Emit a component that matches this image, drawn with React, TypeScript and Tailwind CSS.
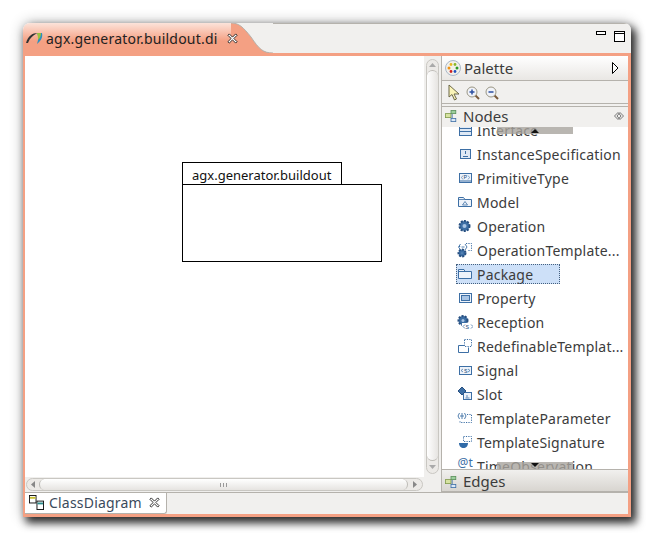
import type { ReactNode } from "react";

const blue = "#3d6fa5";

function Ico({ children }: { children: ReactNode }) {
  return (
    <svg width="16" height="16" viewBox="0 0 16 16" fill="none" stroke={blue} strokeWidth="1" className="shrink-0">
      {children}
    </svg>
  );
}

function Gear({ cx = 7.5, cy = 8, r = 5 }: { cx?: number; cy?: number; r?: number }) {
  return (
    <>
      <circle cx={cx} cy={cy} r={r} fill="#3d6fa5" stroke="#274f80" strokeWidth="2" strokeDasharray="2 1.2" />
      <circle cx={cx} cy={cy} r={r - 3} fill="#a8c4e4" stroke="none" />
    </>
  );
}

const smallText = { fontSize: 6, fontFamily: "Liberation Mono, monospace", fill: "#274f80", stroke: "none" } as const;

const nodes: { label: string; icon: ReactNode; selected?: boolean }[] = [
  {
    label: "Interface",
    icon: (
      <Ico>
        <rect x="2.5" y="1.5" width="12" height="12" fill="#dfe9f5" />
        <path d="M2.5 6.5h12M2.5 9.5h12M8 3v2" />
      </Ico>
    ),
  },
  {
    label: "InstanceSpecification",
    icon: (
      <Ico>
        <rect x="3.5" y="3.5" width="10" height="9" fill="#dfe9f5" />
        <path d="M8.5 5v3M6 10.5h5" />
      </Ico>
    ),
  },
  {
    label: "PrimitiveType",
    icon: (
      <Ico>
        <rect x="2.5" y="3.5" width="12" height="9" fill="#eef3fa" />
        <path d="M2.5 11h12" />
        <text x="6.500" y="9" style={smallText}>P</text>
        <path d="M6 5.500l-1.500 2L6 9.500M11 5.500l1.500 2L11 9.500" strokeWidth="0.6" />
      </Ico>
    ),
  },
  {
    label: "Model",
    icon: (
      <Ico>
        <path d="M1.5 3.5h5l1.5 2h6.5v7h-13z" fill="#eef3fa" />
        <path d="M1.5 5.5h6.5M8 7.5l2.5 3.5h-5z" strokeWidth="0.8" />
      </Ico>
    ),
  },
  { label: "Operation", icon: <Ico><Gear /></Ico> },
  {
    label: "OperationTemplate...",
    icon: (
      <Ico>
        <Gear cx={5} cy={11} r={3.5} />
        <path d="M2 4.5h1.5M9 1.5h5.5v7H11" strokeDasharray="1.2 1.2" />
        <path d="M3.5 2L1.5 5l2 3M8 2l2 3-2 3M4.5 5h3" strokeWidth="0.9" />
      </Ico>
    ),
  },
  {
    label: "Package",
    selected: true,
    icon: (
      <Ico>
        <path d="M1.5 3.5h5.5l1 2h6.5v7h-13z" fill="#eef3fa" />
        <path d="M1.5 5.5h6.5" />
      </Ico>
    ),
  },
  {
    label: "Property",
    icon: (
      <Ico>
        <rect x="2.5" y="3.5" width="12" height="9" fill="#eef3fa" />
        <rect x="4.5" y="5.5" width="8" height="5" fill="#a8c4e4" />
      </Ico>
    ),
  },
  {
    label: "Reception",
    icon: (
      <Ico>
        <Gear cx={6} cy={6.5} r={4.5} />
        <rect x="5" y="9" width="11" height="6.5" fill="#fff" stroke="none" />
        <text x="8.6" y="14.5" style={smallText}>S</text>
        <path d="M8 10.5l-2 2 2 2M14 10.5l2 2-2 2" strokeWidth="0.8" />
      </Ico>
    ),
  },
  {
    label: "RedefinableTemplat...",
    icon: (
      <Ico>
        <path d="M1.5 7.5h6M1.5 7.5v7h10v-5" />
        <rect x="7.5" y="1.5" width="7" height="7" strokeDasharray="1.2 1.2" fill="#fff" />
      </Ico>
    ),
  },
  {
    label: "Signal",
    icon: (
      <Ico>
        <rect x="2.5" y="4.5" width="12" height="8" fill="#eef3fa" />
        <text x="7" y="10.5" style={smallText}>S</text>
        <path d="M6 7l-2 1.5L6 10M11 7l2 1.5L11 10" strokeWidth="0.7" />
      </Ico>
    ),
  },
  {
    label: "Slot",
    icon: (
      <Ico>
        <rect x="6.5" y="6.5" width="8" height="7" fill="#eef3fa" />
        <path d="M10 9v2.5M8.5 12h4" strokeWidth="0.8" />
        <path d="M5 1l4 4-4 4-4-4z" fill="#3d6fa5" stroke="#274f80" />
      </Ico>
    ),
  },
  {
    label: "TemplateParameter",
    icon: (
      <Ico>
        <path d="M2.5 3L1 6l1.5 3M7.5 3L9 6 7.5 9M3 6h4M5 3v6" strokeWidth="0.9" />
        <path d="M10 4.5h4.5v8H3v-1.5" strokeDasharray="1.2 1.2" />
      </Ico>
    ),
  },
  {
    label: "TemplateSignature",
    icon: (
      <Ico>
        <path d="M2 9h9c0 3-2 5-4.500 5S2 12 2 9z" fill="#2f6aa8" stroke="none" />
        <rect x="6.500" y="2.500" width="8" height="5" strokeDasharray="1.200 1.200" />
      </Ico>
    ),
  },
  {
    label: "TimeObservation",
    icon: (
      <Ico>
        <text x="0.500" y="9" style={{ ...smallText, fontSize: 12, fontFamily: "Noto Sans, sans-serif", fill: "#3d6fa5" }}>@t</text>
        <path d="M7.500 11v4" strokeDasharray="1.200 1.200" />
      </Ico>
    ),
  },
];

function GroupIcon() {
  return (
    <svg width="12" height="12" viewBox="0 0 15 15" className="shrink-0">
      <rect x="0.500" y="4.500" width="7" height="5" fill="#d6e2a0" stroke="#7f9a4a" />
      <rect x="7.500" y="0.500" width="6" height="4" fill="#9ccf9c" stroke="#5a8f5a" />
      <rect x="7.500" y="10.500" width="6" height="4" fill="#dbe8f6" stroke="#3d6fa5" />
      <path d="M9 5v5" stroke="#3d6fa5" />
    </svg>
  );
}

function TabClose() {
  return (
    <svg width="11" height="11" viewBox="0 0 12 12" className="shrink-0">
      <path d="M2.500 1L6 4.500 9.500 1 11 2.500 7.500 6 11 9.500 9.500 11 6 7.500 2.500 11 1 9.500 4.500 6 1 2.500z" fill="#fff" stroke="#222" strokeWidth="1" />
    </svg>
  );
}

function DragThumb({ up, className }: { up: boolean; className: string }) {
  return (
    <div className={`absolute left-[55px] flex h-[7px] w-[76px] justify-center bg-[#a8a49e]/80 ${className}`}>
      <svg width="8" height="7" viewBox="0 0 8 7">
        <path d={up ? "M0 6L4 2l4 4z" : "M0 1l4 4 4-4z"} fill="#111" />
      </svg>
    </div>
  );
}

export default function App() {
  return (
    <div className="h-[545px] w-[659px] overflow-hidden bg-white pl-[23px] pt-[23px] font-['Noto_Sans',sans-serif] text-[14px] tracking-[0.2px] text-[#3c3c3c]">
      <div className="flex h-[494px] w-[608px] flex-col overflow-hidden rounded-t-[7px] shadow-[4px_5px_9px_1px_rgba(0,0,0,0.8),0_0_14px_rgba(0,0,0,0.3)]">
        {/* editor tab strip */}
        <div className="flex h-[30px] shrink-0 bg-[#f1f0ee]">
          <div className="flex w-[208px] shrink-0 items-center bg-gradient-to-b from-[#fbe3da] to-[#f4a083] to-[60%] pl-[3px] text-[#222]">
            <svg width="18" height="16" viewBox="0 0 18 16" className="shrink-0">
              <path d="M0 13C2 6 6 3 12 3 7 5 4 8 2 13z" fill="#333" />
              <path d="M11 3h5c1 4-1 8-5 11 1-3 2-7 0-11z" fill="#2b8fc0" />
              <path d="M11 3h4c0 3-1 5-3 7 0-2 0-4-1-7z" fill="#9cc23c" />
            </svg>
            <span className="ml-[2px] shrink-0 whitespace-nowrap tracking-[0.22px]">agx.generator.buildout.di</span>
            <span className="relative z-10 ml-[9px] shrink-0"><TabClose /></span>
          </div>
          <svg width="42" height="30" viewBox="0 0 42 30" className="shrink-0">
            <path d="M0 0C8 0 12 4 20 14 28 26 32 30 42 30H0z" fill="#f4a083" />
            <path d="M0 0C8 0 12 4 20 14 28 26 32 30 42 30" fill="none" stroke="#b5b2ac" />
          </svg>
          <div className="flex-1 border-t border-[#b5b2ac]" />
          <div className="flex items-start gap-[8px] border-t border-[#b5b2ac] pr-[6px] pt-[7px]">
            <div className="h-[4px] w-[10px] border border-black bg-white" />
            <div className="h-[11px] w-[11px] border border-black bg-white">
              <div className="h-[2px] border-b border-black" />
            </div>
          </div>
        </div>

        {/* salmon frame */}
        <div className="flex min-h-0 flex-1 flex-col border-x-[2px] border-b-[3px] border-t-[3px] border-[#f4a083] border-r-[3px]">
          <div className="flex min-h-0 flex-1">
            <div className="flex min-w-0 flex-1 flex-col">
              <div className="flex min-h-0 flex-1">
                {/* diagram canvas */}
                <div className="min-w-0 flex-1 bg-white pl-[157px] pt-[106px] text-[13px] tracking-normal text-[#111]">
                  <div className="flex h-[22px] w-[160px] items-center border border-b-0 border-black pl-[9px] pt-[4px]">
                    agx.generator.buildout
                  </div>
                  <div className="h-[78px] w-[200px] border border-black" />
                </div>
                {/* vertical scrollbar */}
                <div className="flex w-[17px] shrink-0 flex-col items-center bg-[#f0efed] pt-[3px]">
                  <div className="flex h-[415px] w-[13px] flex-col rounded-full border border-[#c9c7c2] bg-[#eceae7]">
                    <div className="flex h-[10px] items-center justify-center">
                      <svg width="7" height="4" viewBox="0 0 7 4"><path d="M0 4l3.500-4L7 4z" fill="#aaa" /></svg>
                    </div>
                    <div className="flex-1 rounded-full border-y border-[#bdbbb6] bg-gradient-to-r from-white to-[#e6e4e1]" />
                    <div className="flex h-[12px] items-center justify-center">
                      <svg width="7" height="4" viewBox="0 0 7 4"><path d="M0 0l3.500 4L7 0z" fill="#aaa" /></svg>
                    </div>
                  </div>
                </div>
              </div>
              {/* horizontal scrollbar */}
              <div className="flex h-[15px] shrink-0 items-start bg-[#f0efed] pl-[1px] pr-[18px] pt-[1px]">
                <div className="flex h-[13px] w-full items-center rounded-full border border-[#c9c7c2] bg-[#eceae7]">
                  <div className="flex w-[12px] justify-center">
                    <svg width="4" height="7" viewBox="0 0 4 7"><path d="M4 0L0 3.500 4 7z" fill="#888" /></svg>
                  </div>
                  <div className="flex h-full flex-1 items-center justify-center gap-[2px] rounded-full border-x border-[#bdbbb6] bg-gradient-to-b from-white to-[#e6e4e1]">
                    <div className="h-[4px] w-px bg-[#999]" />
                    <div className="h-[4px] w-px bg-[#999]" />
                    <div className="h-[4px] w-px bg-[#999]" />
                  </div>
                  <div className="flex w-[14px] justify-center">
                    <svg width="4" height="7" viewBox="0 0 4 7"><path d="M0 0l4 3.500L0 7z" fill="#888" /></svg>
                  </div>
                </div>
              </div>
            </div>

            {/* palette */}
            <div className="flex w-[187px] shrink-0 flex-col border-l border-[#b5b2ac] bg-white">
              <div className="flex h-[25px] shrink-0 items-center border-b border-[#b5b2ac] bg-gradient-to-b from-white to-[#e9e7e4] pl-[3px] pr-[9px]">
                <svg width="16" height="16" viewBox="0 0 16 16" className="shrink-0">
                  <circle cx="8" cy="8" r="7.500" fill="#f2f0ea" stroke="#a9b7c8" />
                  <circle cx="6" cy="4.500" r="1.400" fill="#e8b820" />
                  <circle cx="10" cy="4.500" r="1.400" fill="#8ab82a" />
                  <circle cx="4" cy="8" r="1.500" fill="#f09010" />
                  <circle cx="12" cy="8" r="1.500" fill="#2a9a2a" />
                  <circle cx="6" cy="11.500" r="1.400" fill="#d02020" />
                  <circle cx="10" cy="11.500" r="1.400" fill="#2050c0" />
                </svg>
                <span className="ml-[3px] flex-1 text-[15px] tracking-normal">Palette</span>
                <svg width="7" height="12" viewBox="0 0 7 12"><path d="M0.500 0.500L6 6 0.500 11.500z" fill="#fff" stroke="#000" /></svg>
              </div>
              <div className="flex h-[23px] shrink-0 items-center gap-[4px] border-b border-[#b5b2ac] bg-[#f1f0ee] pl-[6px]">
                <svg width="13" height="17" viewBox="0 0 13 17"><path d="M1 1v12l3-2.500L6.500 16l2-1L6 10h5z" fill="#fbf5b8" stroke="#6b6748" /></svg>
                {["M4.500 7h5M7 4.500v5", "M4.500 7h5"].map((d) => (
                  <svg key={d} width="15" height="15" viewBox="0 0 15 15">
                    <path d="M10 10l4 4" stroke="#7a5a3a" strokeWidth="2" />
                    <circle cx="7" cy="7" r="5" fill="#f1f3f8" stroke="#9a9684" />
                    <path d={d} stroke="#2a4ea0" strokeWidth="1.500" />
                  </svg>
                ))}
              </div>
              <div className="h-[2px] shrink-0 bg-[#f1f0ee]" />
              <div className="flex h-[21px] shrink-0 items-center border-t border-[#b5b2ac] bg-[#f1f0ee] pb-[2px] pl-[3px] pr-[4px]">
                <GroupIcon />
                <span className="ml-[6px] flex-1 text-[15px] tracking-normal">Nodes</span>
                <svg width="10" height="8" viewBox="0 0 10 8">
                  <path d="M4 0.500L0.500 4 4 7.500M6 0.500L9.500 4 6 7.500M4 0.500L7 4 4 7.500M6 0.500L3 4l3 3.500" fill="none" stroke="#777" />
                </svg>
              </div>
              <div className="relative min-h-0 flex-1 overflow-hidden">
                <div className="-mt-[9px] flex flex-col pl-[14px]">
                  {nodes.map((n) => (
                    <div
                      key={n.label}
                      className={`flex shrink-0 items-center gap-[4px] whitespace-nowrap pl-[1px] ${
                        n.selected
                          ? "my-[2px] h-[20px] w-[104px] bg-[#cde0f8] outline-1 -outline-offset-1 outline-dotted outline-[#44607f]"
                          : "h-[24px]"
                      }`}
                    >
                      {n.icon}
                      <span>{n.label}</span>
                    </div>
                  ))}
                </div>
                <DragThumb up className="top-0" />
                <DragThumb up={false} className="bottom-0" />
              </div>
              <div className="flex h-[23px] shrink-0 items-center border-y border-[#b5b2ac] bg-gradient-to-b from-[#f1f0ee] to-[#d8d5d0] pl-[3px] pt-[2px]">
                <GroupIcon />
                <span className="ml-[6px] text-[15px] tracking-normal">Edges</span>
              </div>
            </div>
          </div>

          {/* bottom tabs */}
          <div className="flex h-[22px] shrink-0 border-t border-[#b5b2ac] bg-[#f1f0ee]">
            <div className="flex w-[142px] items-center rounded-br-[3px] border-b border-r border-[#b5b2ac] bg-white pb-[1px] pl-[4px]">
              <svg width="15" height="15" viewBox="0 0 16 16" className="shrink-0">
                <rect x="0.500" y="0.500" width="7" height="8" fill="#fff" stroke="#111" />
                <path d="M1 3h6" stroke="#c8c030" strokeWidth="2" />
                <rect x="8.500" y="6.500" width="7" height="9" fill="#fff" stroke="#111" />
                <path d="M9 9h6" stroke="#2a8a8a" strokeWidth="2" />
              </svg>
              <span className="ml-[5px] text-[#3a4a5c]">ClassDiagram</span>
              <span className="ml-[7px]"><TabClose /></span>
            </div>
            <div className="flex-1" />
          </div>
        </div>
      </div>
    </div>
  );
}
